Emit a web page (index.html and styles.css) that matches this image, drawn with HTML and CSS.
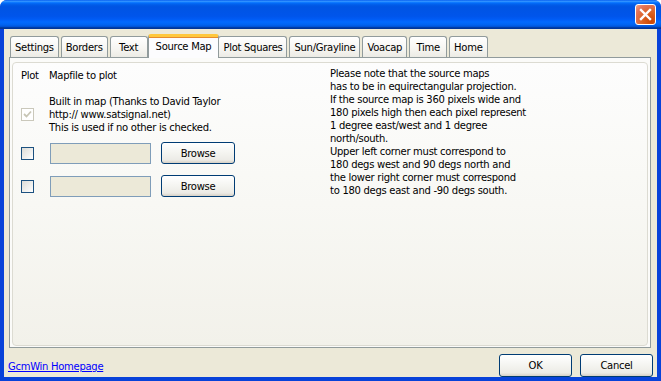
FILE: index.html
```html
<!DOCTYPE html>
<html lang="en">
<head>
  <meta charset="UTF-8" />
  <title>GcmWin - Options</title>
  <link rel="stylesheet" href="styles.css">
</head>
<body>

  <div class="window">
    <div class="titlebar">
      <button class="close" aria-label="Close">
        <svg width="13" height="13" viewBox="0 0 13 13">
          <path d="M2 2 L11 11 M11 2 L2 11" stroke="#fff" stroke-width="2.4" stroke-linecap="square"/>
        </svg>
      </button>
    </div>

    <div class="client">
      <div class="tabs">
        <span class="tab">Settings</span>
        <span class="tab">Borders</span>
        <span class="tab">Text</span>
        <span class="tab active">Source Map</span>
        <span class="tab">Plot Squares</span>
        <span class="tab">Sun/Grayline</span>
        <span class="tab">Voacap</span>
        <span class="tab">Time</span>
        <span class="tab">Home</span>
      </div>

      <div class="page">
        <div class="frame">
          <div class="maps">
            <div class="row head">
              <span class="col-check">Plot</span>
              <span>Mapfile to plot</span>
            </div>
            <div class="row builtin">
              <span class="col-check"><span class="check disabled">
                <svg width="9" height="9" viewBox="0 0 9 9"><path d="M1 4 L3.5 6.5 L8 1.5" fill="none" stroke="#c8c6b6" stroke-width="1.8"/></svg>
              </span></span>
              <div class="note">
                Built in map (Thanks to David Taylor<br>
                http:// www.satsignal.net)<br>
                This is used if no other is checked.
              </div>
            </div>
            <div class="row file">
              <span class="col-check"><span class="check"></span></span>
              <span class="textbox"></span>
              <button class="btn browse">Browse</button>
            </div>
            <div class="row file">
              <span class="col-check"><span class="check"></span></span>
              <span class="textbox"></span>
              <button class="btn browse">Browse</button>
            </div>
          </div>

          <p class="info">
            Please note that the source maps<br>
            has to be in equirectangular projection.<br>
            If the source map is 360 pixels wide and<br>
            180 pixels high then each pixel represent<br>
            1 degree east/west and 1 degree<br>
            north/south.<br>
            Upper left corner must correspond to<br>
            180 degs west and 90 degs north and<br>
            the lower right corner must correspond<br>
            to 180 degs east and -90 degs south.
          </p>
        </div>
      </div>

      <div class="footer">
        <a href="#" class="link">GcmWin Homepage</a>
        <div class="actions">
          <button class="btn">OK</button>
          <button class="btn">Cancel</button>
        </div>
      </div>
    </div>
  </div>

</body>
</html>
```

FILE: styles.css
```css
html, body {
  margin: 0;
  background: #ffffff;
}

body {
  font-family: 'DejaVu Sans', 'Noto Sans', sans-serif;
  font-size: 10px;
  letter-spacing: -0.28px;
  color: #000;
}

.window {
  width: 661px;
  height: 381px;
  display: flex;
  flex-direction: column;
  background: #0842d9;
  border-radius: 7px 7px 0 0;
  overflow: hidden;
}

.titlebar {
  height: 29px;
  flex-shrink: 0;
  display: flex;
  justify-content: flex-end;
  align-items: center;
  padding-right: 5px;
  background: linear-gradient(to bottom, #0058ee 0%, #3593ff 4%, #288eff 6%, #127dff 8%, #036ffc 10%, #0262ee 14%, #0057e5 20%, #0054e3 24%, #0055eb 56%, #005bf5 66%, #026afe 76%, #0062ef 86%, #0052d6 92%, #0040ab 94%, #003092 100%);
}

.close {
  width: 21px;
  height: 21px;
  padding: 0;
  border: 1px solid #fff;
  border-radius: 3px;
  background: radial-gradient(circle at 80% 85%, #cc4600 0%, #dc6527 45%, #e5745a 75%, #f0a48c 100%);
  display: flex;
  align-items: center;
  justify-content: center;
}

.client {
  flex: 1;
  margin: 0 4px 4px 4px;
  background: #ece9d8;
  display: flex;
  flex-direction: column;
  padding-top: 5px;
}

/* tab strip */
.tabs {
  height: 23px;
  display: flex;
  align-items: flex-end;
  padding-left: 6px;
  position: relative;
  z-index: 1;
}

.tab {
  box-sizing: border-box;
  min-width: 38px;
  height: 21px;
  line-height: 21px;
  padding: 0 4px;
  margin-right: 2px;
  text-align: center;
  border: 1px solid #919b9c;
  border-bottom: none;
  border-radius: 3px 3px 0 0;
  background: linear-gradient(to bottom, #ffffff, #f6f5f1 60%, #ecebe5);
  white-space: nowrap;
}

.tab.active {
  height: 24px;
  line-height: 19px;
  margin: 0 0 -1px -2px;
  padding: 0 7px;
  border-top: 3px solid #ffc83c;
  background: #fcfcfe;
  box-shadow: inset 0 1px 0 #e68b2c;
}

.tab.active + .tab {
  margin-left: -1px;
}

/* tab page */
.page {
  flex: 1;
  margin: 0 6px 0 5px;
  border: 1px solid #919b9c;
  background: #fbfbf9;
  display: flex;
  padding: 4px 2px 1px 2px;
}

.frame {
  flex: 1;
  display: flex;
  border: 1px solid #dcdbd2;
  border-radius: 4px;
  background: linear-gradient(to bottom, #fdfdfd, #f8f8f4 50%, #f2f1ea);
  padding: 6px 0 0 8px;
}

.maps {
  width: 309px;
  flex-shrink: 0;
}

.row {
  display: flex;
  align-items: center;
  line-height: 13px;
}

.col-check {
  width: 28px;
  flex-shrink: 0;
}

.row.builtin {
  margin-top: 13px;
}

.row.file {
  margin-top: 8px;
}

.row.file + .row.file {
  margin-top: 11px;
}

.check {
  display: block;
  width: 11px;
  height: 11px;
  border: 1px solid #1c5180;
  background: linear-gradient(135deg, #dcdcd7, #ffffff);
}

.check.disabled {
  border-color: #cac8bb;
  background: #ffffff;
  display: flex;
  align-items: center;
  justify-content: center;
}

.textbox {
  width: 99px;
  height: 19px;
  border: 1px solid #7f9db9;
  background: #ece9d8;
  margin-left: 1px;
}

.btn {
  font-family: inherit;
  font-size: 10px;
  letter-spacing: inherit;
  color: #000;
  height: 23px;
  width: 73px;
  padding: 0;
  border: 1px solid #003c74;
  border-radius: 3px;
  background: linear-gradient(to bottom, #ffffff, #f4f4f0 50%, #ecebe6 85%, #d6d0c5);
}

.browse {
  width: 74px;
  height: 22px;
  margin-left: 10px;
}

.info {
  margin: 0;
  line-height: 13px;
  margin-top: -2px;
}

/* bottom bar */
.footer {
  height: 29px;
  flex-shrink: 0;
  display: flex;
  align-items: flex-end;
  justify-content: space-between;
  padding: 0 4px;
}

.link {
  color: #0000ff;
  text-decoration: underline;
  margin-bottom: 5px;
}

.actions {
  display: flex;
  gap: 8px;
}
```
